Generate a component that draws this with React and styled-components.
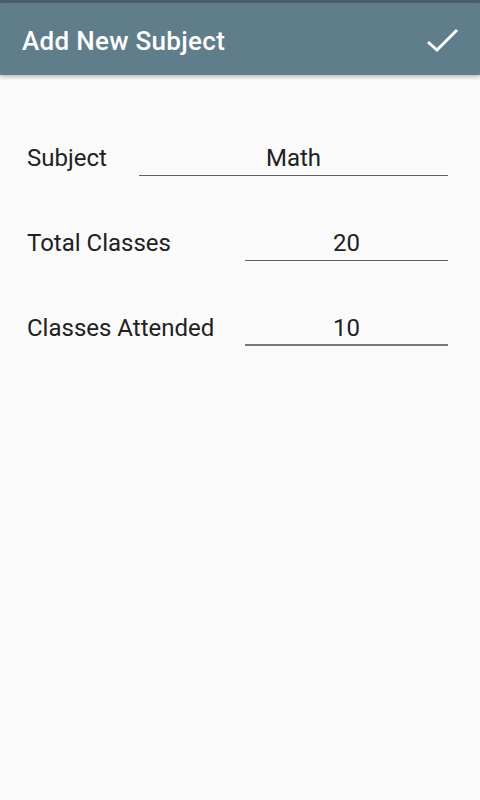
import React from "react";
import styled, { createGlobalStyle } from "styled-components";

const GlobalStyle = createGlobalStyle`
  html, body {
    margin: 0;
    padding: 0;
    background: #fafafa;
  }
  body {
    font-family: Roboto, "Noto Sans", sans-serif;
  }
`;

const Screen = styled.div`
  width: 480px;
  height: 800px;
  background: #fafafa;
  display: flex;
  flex-direction: column;
  overflow: hidden;
`;

const StatusStrip = styled.div`
  height: 3px;
  background: #4b5d67;
`;

const Toolbar = styled.div`
  height: 72px;
  box-sizing: border-box;
  background: #607d8b;
  display: flex;
  align-items: center;
  justify-content: space-between;
  padding: 4px 20px 0 22px;
  box-shadow: 0 2px 4px rgba(0, 0, 0, 0.25);
  position: relative;
  z-index: 1;
`;

const Title = styled.h1`
  margin: 0;
  color: #ffffff;
  font-size: 26px;
  font-weight: 500;
  letter-spacing: 0.3px;
`;

const CheckButton = styled.button`
  border: 0;
  background: none;
  padding: 0;
  width: 36px;
  height: 36px;
  display: flex;
  align-items: center;
  justify-content: center;
  cursor: pointer;
`;

const Form = styled.div`
  display: flex;
  flex-direction: column;
  padding: 69px 32px 0 27px;
  gap: 53px;
`;

const Row = styled.div`
  display: flex;
  align-items: flex-end;
`;

const Label = styled.span`
  width: ${({ $width }) => $width}px;
  flex-shrink: 0;
  font-size: 24px;
  color: #212121;
  line-height: 28px;
  padding-bottom: 4px;
`;

const Field = styled.div`
  flex: 1;
  text-align: center;
  font-size: 24px;
  color: #212121;
  line-height: 28px;
  padding-bottom: ${({ $focused }) => ($focused ? 2 : 3)}px;
  border-bottom: ${({ $focused }) => ($focused ? "2px solid #787878" : "1px solid #616161")};
`;

const fields = [
  { label: "Subject", value: "Math", width: 112 },
  { label: "Total Classes", value: "20", width: 218 },
  { label: "Classes Attended", value: "10", width: 218, focused: true },
];

const App = () => {
  return (
    <>
      <GlobalStyle />
      <Screen>
        <StatusStrip />
        <Toolbar>
          <Title>Add New Subject</Title>
          <CheckButton aria-label="Save">
            <svg width="34" height="28" viewBox="0 0 34 28">
              <path
                d="M3 15 L12 23 L32 3"
                fill="none"
                stroke="#ffffff"
                strokeWidth="3"
              />
            </svg>
          </CheckButton>
        </Toolbar>
        <Form>
          {fields.map((f) => (
            <Row key={f.label}>
              <Label $width={f.width}>{f.label}</Label>
              <Field $focused={f.focused}>{f.value}</Field>
            </Row>
          ))}
        </Form>
      </Screen>
    </>
  );
};

export default App;
